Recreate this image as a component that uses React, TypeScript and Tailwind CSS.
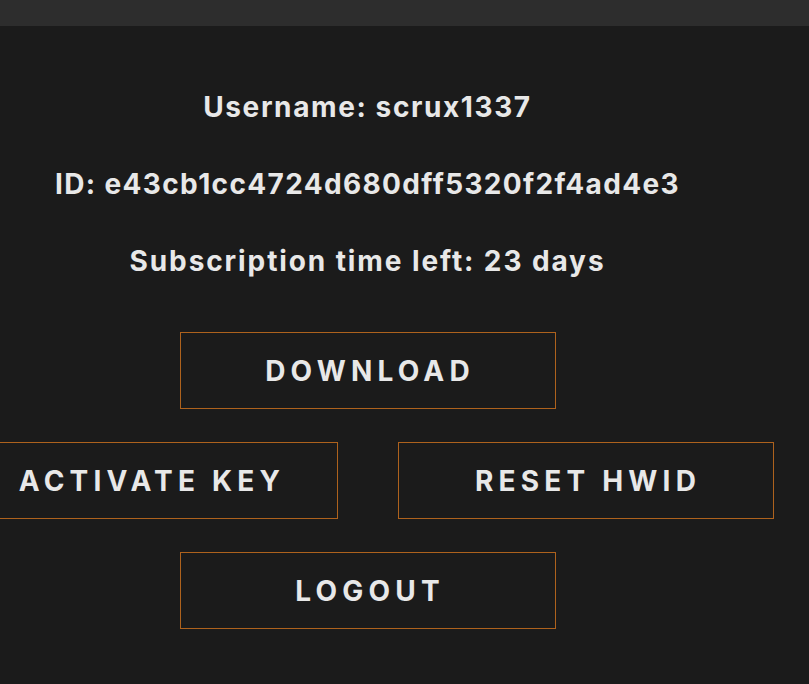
import React from 'react';

const Btn: React.FC<{ label: string }> = ({ label }) => (
  <button className="w-[376px] h-[77px] shrink-0 border border-[#ae621d] bg-transparent text-[#e8e8e8] text-[28px] font-bold tracking-[5.2px] pl-[5px] uppercase">
    {label}
  </button>
);

const App: React.FC = () => {
  return (
    <div className="min-h-screen bg-[#1b1b1b] text-[#e8e8e8] overflow-hidden" style={{ fontFamily: 'Inter, "Noto Sans", sans-serif' }}>
      <div className="h-[26px] bg-[#2d2d2d]" />
      <div className="w-[735px] flex flex-col items-center pt-[43px]">
        <div className="leading-[77px] text-[28px] font-bold text-center">
          <p className="tracking-[1.6px]">Username: scrux1337</p>
          <p className="tracking-[1.35px]">ID: e43cb1cc4724d680dff5320f2f4ad4e3</p>
          <p className="tracking-[1.9px]">Subscription time left: 23 days</p>
        </div>
        <div className="mt-[32px] flex flex-col items-center gap-[33px] w-full">
          <Btn label="Download" />
          <div className="flex justify-center gap-[60px] w-full">
            <Btn label="Activate key" />
            <Btn label="Reset HWID" />
          </div>
          <Btn label="Logout" />
        </div>
      </div>
    </div>
  );
};

export default App;
